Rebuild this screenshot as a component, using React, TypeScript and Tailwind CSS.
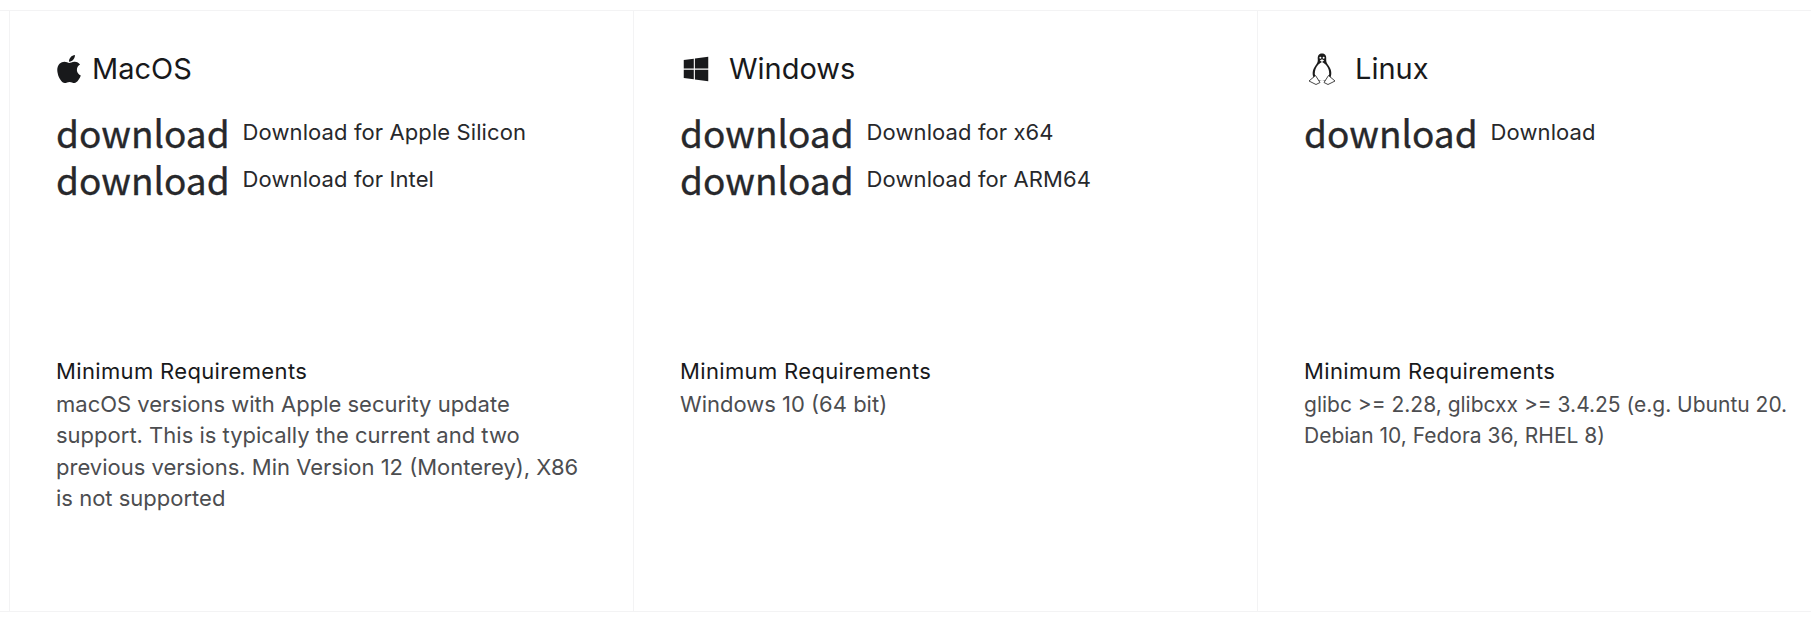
import { FaApple, FaWindows } from 'react-icons/fa'

const FONT = "font-['Inter','Noto_Sans',sans-serif]"

function Tux() {
  return (
    <svg viewBox="0 0 28 32" className="w-[28px] h-[32px] ml-[4px]">
      {/* body */}
      <path
        d="M14 0.5 C10.5 0.5 9.5 3 9.8 6.5 C10 9 9 10.5 7.2 13 C5 16 3.8 20 5.5 24.5 L9 28 H19 L22.5 24.5 C24.2 20 23 16 20.8 13 C19 10.5 18 9 18.2 6.5 C18.5 3 17.5 0.5 14 0.5 Z"
        fill="#1b1b1b"
      />
      <path d="M14 9 C10.5 10.5 6.8 15 6.8 20.5 C6.8 25 10 28 14 28 C18 28 21.2 25 21.2 20.5 C21.2 15 17.5 10.5 14 9 Z" fill="#fff" />
      {/* feet */}
      <path d="M7.5 22.5 L1 28 L8 31.5 L12 29.5 Z" fill="#fff" stroke="#333" strokeWidth="0.9" strokeLinejoin="round" />
      <path d="M20.5 22.5 L27 28 L20 31.5 L16 29.5 Z" fill="#fff" stroke="#333" strokeWidth="0.9" strokeLinejoin="round" />
      {/* eyes and beak */}
      <circle cx="12.4" cy="4.8" r="1" fill="#fff" />
      <circle cx="15.6" cy="4.8" r="1" fill="#fff" />
      <path d="M11.8 7.4 L14 6.3 L16.2 7.4 L14 9 Z" fill="#fff" />
    </svg>
  )
}

function DownloadRow({ label }: { label: string }) {
  return (
    <a className="flex items-start h-[47px] text-[#27282b]">
      <span className="font-['Noto_Sans_CJK_SC',sans-serif] text-[37px] leading-[47px] mr-[13px] [-webkit-text-stroke:0.35px_#27282b]">download</span>
      <span className={`${FONT} text-[22px] tracking-[0.1px] leading-[46px]`}>{label}</span>
    </a>
  )
}

function Column({
  icon,
  name,
  gap,
  links,
  bodySize,
  children,
}: {
  icon: React.ReactNode
  name: string
  gap: string
  links: string[]
  bodySize: string
  children: React.ReactNode
}) {
  return (
    <section className="w-[624px] shrink-0 h-full border-l border-[#f3f3f4] pl-[46px] pt-[36px]">
      <h3 className={`flex items-center h-[44px] text-[29px] text-[#18191b] ${FONT} ${gap}`}>
        {icon}
        {name}
      </h3>
      <div className="h-[264px] pt-[18px]">
        {links.map((l) => (
          <DownloadRow key={l} label={l} />
        ))}
      </div>
      <p className={`${FONT} text-[22px] tracking-[0.35px] leading-[32px] mb-[2px] text-[#18191b]`}>Minimum Requirements</p>
      <p className={`${FONT} ${bodySize} leading-[31.4px] text-[#4c4d50] w-[530px]`}>{children}</p>
    </section>
  )
}

export default function App() {
  return (
    <div className="h-[618px] w-[1811px] overflow-hidden bg-white pt-[10px] pb-[6px]">
      <div className="flex h-full border-y border-[#f3f3f4] pl-[9px]">
        <Column icon={<FaApple className="w-[26px] h-[32px] text-[#18191b]" />} name="MacOS" gap="gap-[10px]" bodySize="text-[22px]" links={['Download for Apple Silicon', 'Download for Intel']}>
          macOS versions with Apple security update support. This is typically the current and two previous versions. Min Version 12 (Monterey), X86 is not supported
        </Column>
        <Column icon={<FaWindows className="w-[28px] h-[28px] ml-[2px] text-[#18191b]" />} name="Windows" gap="gap-[19px]" bodySize="text-[22px]" links={['Download for x64', 'Download for ARM64']}>
          Windows 10 (64 bit)
        </Column>
        <Column icon={<Tux />} name="Linux" gap="gap-[19px]" bodySize="text-[21px]" links={['Download']}>
          glibc &gt;= 2.28, glibcxx &gt;= 3.4.25 (e.g. Ubuntu 20. Debian 10, Fedora 36, RHEL 8)
        </Column>
      </div>
    </div>
  )
}
